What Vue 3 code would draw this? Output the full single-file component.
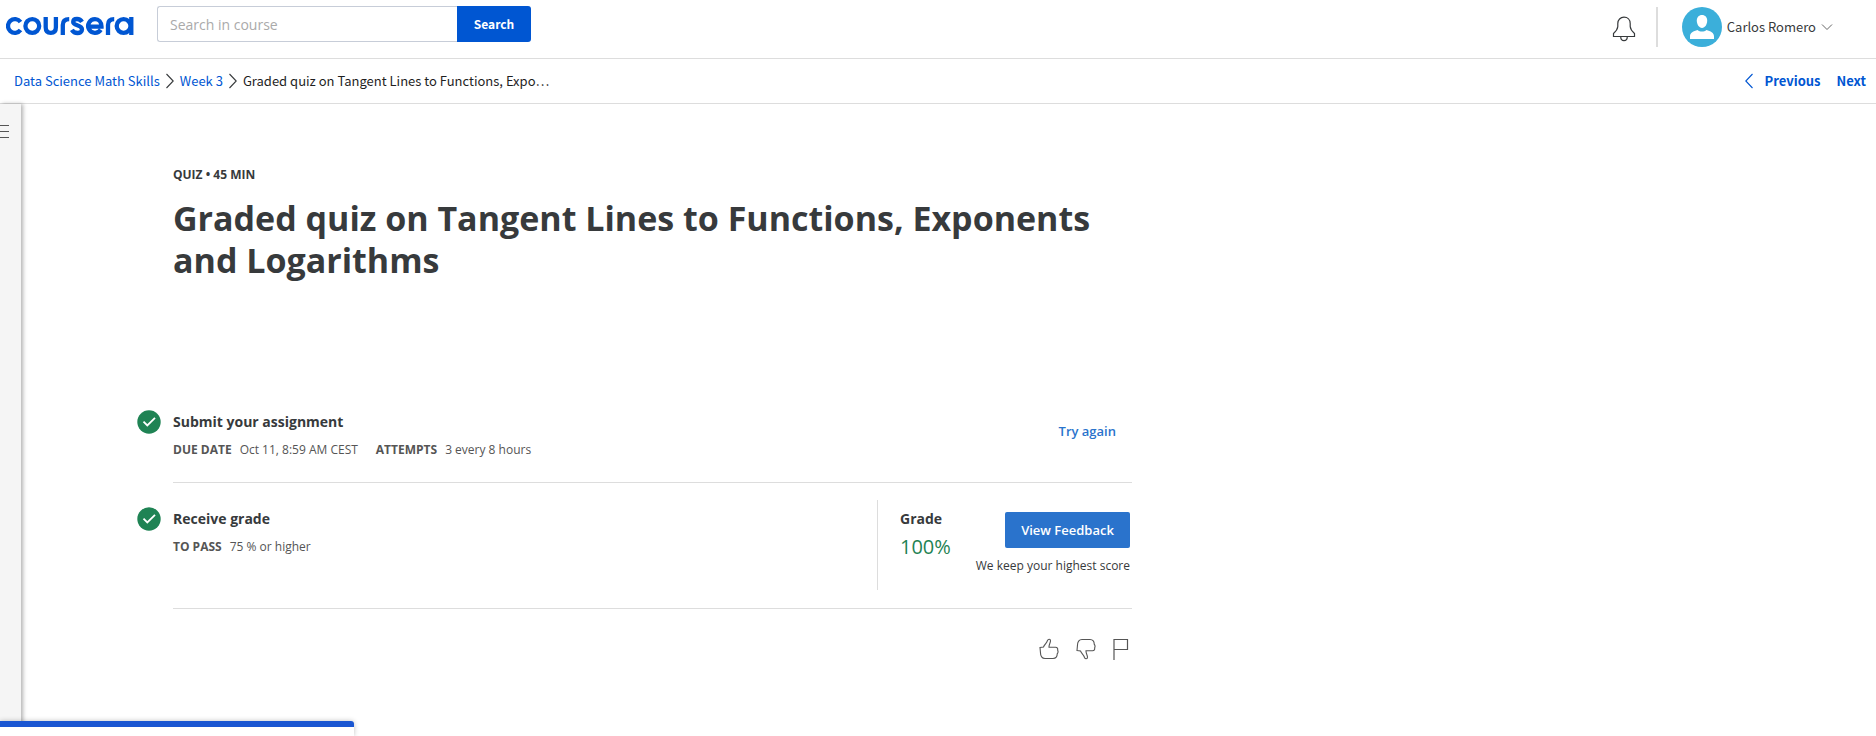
<script setup>
const crumbs = ['Data Science Math Skills', 'Week 3']
</script>

<template>
  <div class="page">
    <header class="top">
      <a class="brand" href="#" aria-label="coursera">
        <svg width="128" height="22" viewBox="0 0 128 22" fill="none" stroke="#0056d2" stroke-width="4.300">
          <path d="M14.500 7A6.900 6.900 0 1 0 14.500 15" />
          <circle cx="26.300" cy="11" r="6.900" />
          <path d="M39.700 2V12.300C39.700 16 41.700 17.900 44.800 17.900S49.900 16 49.900 12.300V2" />
          <path d="M56.800 20V10C56.800 6 59 4.200 63.200 4.200" />
          <path d="M76 6.800C74.900 4.900 73 4 71 4C68.600 4 67.200 5.200 67.200 7C67.200 11.200 76 9.400 76 14.600C76 16.800 74 18 71.500 18C69 18 67 16.800 65.800 14.800" />
          <path d="M82 11.600H95.500C95.500 6.900 92.600 4.100 89 4.100A6.900 6.900 0 1 0 94.800 14.800" />
          <path d="M102 20V10C102 6 104.200 4.200 108.200 4.200" />
          <circle cx="117.600" cy="11" r="6.900" />
          <path d="M125.300 2V20" />
        </svg>
      </a>
      <form class="search" role="search" @submit.prevent>
        <input type="text" placeholder="Search in course" aria-label="Search in course" />
        <button type="submit">Search</button>
      </form>
      <div class="account">
        <button class="plain bell" aria-label="Notifications">
          <svg width="24" height="26" viewBox="0 0 24 26" fill="none" stroke="#373a3c" stroke-width="1.2">
            <path d="M1.500 20.500V17.500C3.500 15.800 5.500 13.800 5.800 10.500V7.500C5.800 3.800 8.400 1.200 12 1.200S18.200 3.800 18.200 7.500V10.500C18.500 13.800 20.500 15.800 22.500 17.500V20.500Z" />
            <path d="M8.700 20.500C8.700 23.200 10 24.600 12 24.600S15.300 23.200 15.300 20.500" />
          </svg>
        </button>
        <button class="plain user">
          <svg width="40" height="40" viewBox="0 0 40 40">
            <circle cx="20" cy="20" r="20" fill="#3bafda" />
            <path d="M20 8C16.800 8 14.800 10.300 14.800 13.600C14.800 17.600 17 21 20 21S25.200 17.600 25.200 13.600C25.200 10.300 23.200 8 20 8Z" fill="#fff" />
            <path d="M8 32V29.500C8 25.500 11.500 24 15.500 23C18 25 22 25 24.500 23C28.500 24 32 25.500 32 29.500V32Z" fill="#fff" />
          </svg>
          <span>Carlos Romero</span>
          <svg width="12" height="8" viewBox="0 0 12 8" fill="none" stroke="#666" stroke-width="1"><path d="M1 1.500L6 6.500L11 1.500" /></svg>
        </button>
      </div>
    </header>

    <nav class="crumbs" aria-label="Breadcrumb">
      <template v-for="c in crumbs" :key="c">
        <a href="#">{{ c }}</a>
        <svg width="8" height="16" viewBox="0 0 8 16" fill="none" stroke="#373a3c" stroke-width="1.100"><path d="M0.500 1L7.200 8L0.500 15" /></svg>
      </template>
      <span class="current">Graded quiz on Tangent Lines to Functions, Expo…</span>
      <div class="pager">
        <a href="#"><svg width="8" height="16" viewBox="0 0 8 16" fill="none" stroke="#0056d2" stroke-width="1.100"><path d="M7.500 1L0.800 8L7.500 15" /></svg>Previous</a>
        <a href="#">Next</a>
      </div>
    </nav>

    <div class="body">
      <aside class="rail">
        <button class="plain" aria-label="Open navigation">
          <svg width="9" height="15" viewBox="0 0 9 15" stroke="#555" stroke-width="1"><path d="M0 1.500H9M0 7.500H9M0 13.500H9" /></svg>
        </button>
      </aside>
      <main>
        <p class="kind">QUIZ • 45 MIN</p>
        <h1>Graded quiz on Tangent Lines to Functions, Exponents and Logarithms</h1>

        <section class="step submit">
          <svg class="tick" width="24" height="24" viewBox="0 0 24 24"><circle cx="12" cy="12" r="11.700" fill="#1f8354" /><path d="M6.500 11.700L10.300 15.500L18 7.800" fill="none" stroke="#fff" stroke-width="1.800" /></svg>
          <div class="info">
            <h2>Submit your assignment</h2>
            <p class="meta"><b>DUE DATE</b><span>Oct 11, 8:59 AM CEST</span><b>ATTEMPTS</b><span>3 every 8 hours</span></p>
          </div>
          <a class="again" href="#">Try again</a>
        </section>

        <section class="step receive">
          <svg class="tick" width="24" height="24" viewBox="0 0 24 24"><circle cx="12" cy="12" r="11.700" fill="#1f8354" /><path d="M6.500 11.700L10.300 15.500L18 7.800" fill="none" stroke="#fff" stroke-width="1.800" /></svg>
          <div class="info">
            <h2>Receive grade</h2>
            <p class="meta"><b>TO PASS</b><span>75 % or higher</span></p>
          </div>
          <div class="result">
            <div class="grade">
              <h2>Grade</h2>
              <p>100%</p>
            </div>
            <div class="feedback">
              <button>View Feedback</button>
              <p>We keep your highest score</p>
            </div>
          </div>
        </section>

        <div class="rate">
          <button class="plain" aria-label="Like">
            <svg width="20" height="22" viewBox="0 0 20 22" fill="none" stroke="#555" stroke-width="1.100"><path d="M1 9.500L4.500 9C5.500 6.500 7.500 5.500 8.500 2.500C9.200 0.700 11.500 0.700 11.500 2.800C11.500 5 9.800 6.500 10 9.300H16.500C18.300 9.300 19 10.500 18.600 12C19.300 13.300 19 14.800 18.200 15.800C18.300 18.500 17 20.500 14 20.500H6C3 20.500 1.500 18 1.500 15Z" /></svg>
          </button>
          <button class="plain" aria-label="Dislike">
            <svg width="20" height="22" viewBox="0 0 20 22" fill="none" stroke="#555" stroke-width="1.100"><path d="M1 12.500L4.500 13C5.500 15.500 7.500 16.500 8.500 19.500C9.200 21.300 11.500 21.300 11.500 19.200C11.500 17 9.800 15.500 10 12.700H16.500C18.300 12.700 19 11.500 18.600 10C19.300 8.700 19 7.200 18.200 6.200C18.300 3.500 17 1.500 14 1.500H6C3 1.500 1.500 4 1.500 7Z" /></svg>
          </button>
          <button class="plain" aria-label="Report">
            <svg width="16" height="22" viewBox="0 0 16 22" fill="none" stroke="#555" stroke-width="1.200"><path d="M1 22V1.500H14.500V11.500H1" /></svg>
          </button>
        </div>
      </main>
    </div>
    <div class="drawer"></div>
  </div>
</template>

<style>
body { background: #fff; }
</style>

<style scoped>
* { box-sizing: border-box; }
.page { font-family: "Open Sans", sans-serif; font-size: 13px; line-height: 20px; color: #373a3c; min-height: 100vh; display: flex; flex-direction: column; overflow: hidden; }
p, h1, h2 { margin: 0; }
svg { display: block; flex: none; }
a { color: #0056d2; text-decoration: none; }
button, input { font: inherit; }
.plain { border: 0; padding: 0; background: none; color: inherit; cursor: pointer; }
.top, .crumbs { font-family: "Noto Sans CJK SC", "Open Sans", sans-serif; font-size: 13px; }
.top { display: flex; align-items: flex-start; height: 59px; padding: 6px 43px 0 6px; border-bottom: 1px solid #ddd; }
.brand { padding-top: 9px; }
.search { display: flex; margin-left: 23px; }
.search input { width: 300px; height: 36px; padding: 0 12px; border: 1px solid #c7cdd8; border-right: 0; border-radius: 3px 0 0 3px; font-family: "Open Sans", sans-serif; font-size: 14px; outline: 0; }
.search input::placeholder { color: #aaa; }
.search button { width: 74px; height: 36px; padding: 0; border: 0; border-radius: 0 3px 3px 0; background: #0056d2; color: #fff; font-size: 12px; font-weight: 700; }
.account { margin-left: auto; display: flex; align-items: center; height: 42px; }
.bell { margin-right: 20px; padding-top: 3px; }
.user { display: flex; align-items: center; height: 40px; padding-left: 24px; border-left: 2px solid #ddd; }
.user span { margin: 0 5px; }
.crumbs { display: flex; align-items: center; gap: 6px; height: 45px; padding: 0 10px 0 14px; border-bottom: 1px solid #ddd; }
.current { color: #1f1f1f; }
.pager { margin-left: auto; display: flex; gap: 16px; font-weight: 700; }
.pager a { display: flex; align-items: center; gap: 12px; }
.body { flex: 1; display: flex; }
.rail { width: 21px; padding-top: 20px; background: #f5f5f5; box-shadow: 2px 0 4px rgba(0, 0, 0, 0.3); }
main { box-sizing: content-box; width: 959px; padding: 61px 0 0 152px; }
.kind { font-size: 12px; font-weight: 700; }
h1 { margin-top: 12px; font-size: 34px; line-height: 42px; font-weight: 700; }
h2 { font-size: 14px; line-height: 20px; font-weight: 700; }
.step { display: flex; border-bottom: 1px solid #ddd; }
.tick { margin-left: -36px; margin-right: 12px; }
.info { flex: 1; padding-top: 2px; }
.submit { margin-top: 129px; height: 73px; }
.receive { padding-top: 24px; height: 126px; }
.meta { display: flex; margin-top: 8px; font-size: 12px; color: #555; }
.meta b { margin-right: 8px; font-weight: 700; }
.meta span { margin-right: 18px; }
.again { padding: 11px 16px 0 0; font-weight: 600; color: #2a73cc; }
.result { display: flex; justify-content: space-between; width: 255px; height: 90px; margin-top: -7px; padding: 9px 2px 0 22px; border-left: 1px solid #ddd; }
.grade p { margin-top: 4px; font-size: 20px; line-height: 28px; color: #1f8354; }
.feedback { text-align: right; padding-top: 3px; }
.feedback button { width: 125px; height: 36px; border: 0; border-radius: 2px; background: #2a73cc; color: #fff; font-weight: 600; }
.feedback p { margin-top: 8px; font-size: 12px; }
.rate { display: flex; justify-content: flex-end; gap: 17px; padding: 29px 3px 40px 0; }
.drawer { position: fixed; left: 0; bottom: 0; width: 354px; height: 15px; border-top: 6px solid #1a56d2; border-radius: 0 3px 0 0; background: #fff; box-shadow: 0 0 5px rgba(0, 0, 0, 0.25); }
</style>
